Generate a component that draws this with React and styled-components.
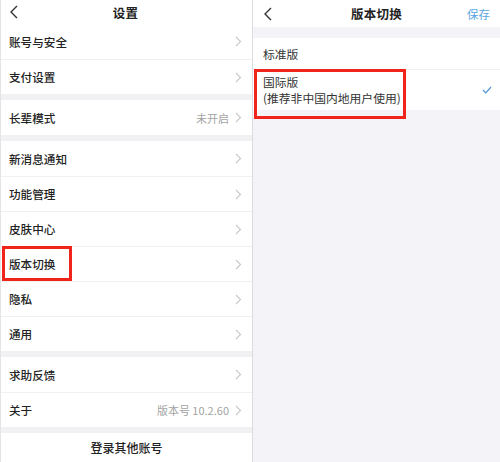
import React from "react";
import styled, { createGlobalStyle } from "styled-components";

const Global = createGlobalStyle`
  html, body { margin: 0; padding: 0; background: #fff; }
  body { font-family: "Noto Sans CJK SC", "Noto Sans", sans-serif; }
`;

const Page = styled.div`
  display: flex;
  width: 500px;
  height: 462px;
  overflow: hidden;
`;

const LeftPanel = styled.div`
  width: 251px;
  flex: none;
  background: #f1f1f3;
  display: flex;
  flex-direction: column;
  border-left: 1px solid #e4e4e4;
  border-right: 1px solid #dcdcdc;
`;

const RightPanel = styled.div`
  flex: 1;
  background: #f4f4f8;
  display: flex;
  flex-direction: column;
`;

const Header = styled.div`
  height: ${(p) => p.$h}px;
  background: #fff;
  display: grid;
  grid-template-columns: 1fr auto 1fr;
  align-items: center;
  padding: 0 ${(p) => p.$pr}px 0 ${(p) => p.$pl}px;
  flex: none;
`;

const Title = styled.div`
  font-size: 12.5px;
  font-weight: 700;
  color: #222;
  letter-spacing: 0.2px;
`;

const SaveBtn = styled.div`
  justify-self: end;
  font-size: 11.5px;
  color: #5ba4e0;
`;

const Group = styled.div`
  background: #fff;
  margin-top: ${(p) => p.$mt}px;
  display: flex;
  flex-direction: column;
`;

const Row = styled.div`
  position: relative;
  height: ${(p) => p.$h || 35}px;
  display: flex;
  align-items: center;
  padding: 0 10px 0 8px;
  box-sizing: border-box;
  & + & {
    border-top: 1px solid #f1f1f1;
  }
`;

const Label = styled.div`
  flex: 1;
  font-size: 11.6px;
  font-weight: 500;
  color: #222;
  position: relative;
  z-index: 1;
`;

const Value = styled.div`
  font-size: 11px;
  color: #a3a3a3;
  margin-right: 6px;
`;

const CenterRow = styled.div`
  height: 29px;
  display: flex;
  align-items: center;
  justify-content: center;
  font-size: 12px;
  font-weight: 500;
  color: #222;
`;

const OptionRow = styled.div`
  position: relative;
  min-height: ${(p) => p.$h}px;
  display: flex;
  align-items: center;
  padding: 0 8px 0 10px;
  box-sizing: border-box;
  & + & {
    border-top: 1px solid #f0f0f0;
  }
`;

const OptionText = styled.div`
  flex: 1;
  font-size: 11.8px;
  line-height: 16px;
  color: #333;
  position: relative;
  z-index: 1;
`;

const Highlight = styled.div`
  position: absolute;
  left: ${(p) => p.$l}px;
  top: ${(p) => p.$t}px;
  width: ${(p) => p.$w}px;
  height: ${(p) => p.$h}px;
  border: 3px solid #f0241b;
  box-sizing: border-box;
  pointer-events: none;
`;

const Back = () => (
  <svg width="10" height="14" viewBox="0 0 10 14">
    <polyline points="8,1 2,7 8,13" fill="none" stroke="#333" strokeWidth="1.4" />
  </svg>
);

const Chevron = () => (
  <svg width="7" height="11" viewBox="0 0 7 11">
    <polyline points="1,1 5.5,5.5 1,10" fill="none" stroke="#c8c8cc" strokeWidth="1.1" />
  </svg>
);

const Check = () => (
  <svg width="10" height="8" viewBox="0 0 10 8">
    <polyline points="1,4 3.8,6.8 9,1" fill="none" stroke="#4c94d8" strokeWidth="1.2" />
  </svg>
);

const groups = [
  [{ t: "账号与安全" }, { t: "支付设置" }],
  [{ t: "长辈模式", v: "未开启" }],
  [
    { t: "新消息通知" },
    { t: "功能管理" },
    { t: "皮肤中心" },
    { t: "版本切换", mark: true },
    { t: "隐私" },
    { t: "通用" },
  ],
  [{ t: "求助反馈" }, { t: "关于", v: "版本号 10.2.60" }],
];

export default function App() {
  return (
    <Page>
      <Global />
      <LeftPanel>
        <Header $h={24} $pl={8} $pr={10}>
          <Back />
          <Title>设置</Title>
          <span />
        </Header>
        {groups.map((g, gi) => (
          <Group key={gi} $mt={gi === 0 ? 0 : 6}>
            {g.map((r) => (
              <Row key={r.t}>
                {r.mark && <Highlight $l={1} $t={-1} $w={70} $h={35} />}
                <Label>{r.t}</Label>
                {r.v && <Value>{r.v}</Value>}
                <Chevron />
              </Row>
            ))}
          </Group>
        ))}
        <Group $mt={6}>
          <CenterRow>登录其他账号</CenterRow>
        </Group>
      </LeftPanel>
      <RightPanel>
        <Header $h={27} $pl={10} $pr={10}>
          <Back />
          <Title>版本切换</Title>
          <SaveBtn>保存</SaveBtn>
        </Header>
        <Group $mt={11}>
          <OptionRow $h={31}>
            <OptionText>标准版</OptionText>
          </OptionRow>
          <OptionRow $h={41}>
            <Highlight $l={1} $t={-1} $w={152} $h={50} />
            <OptionText>
              国际版
              <br />
              (推荐非中国内地用户使用)
            </OptionText>
            <Check />
          </OptionRow>
        </Group>
      </RightPanel>
    </Page>
  );
}
